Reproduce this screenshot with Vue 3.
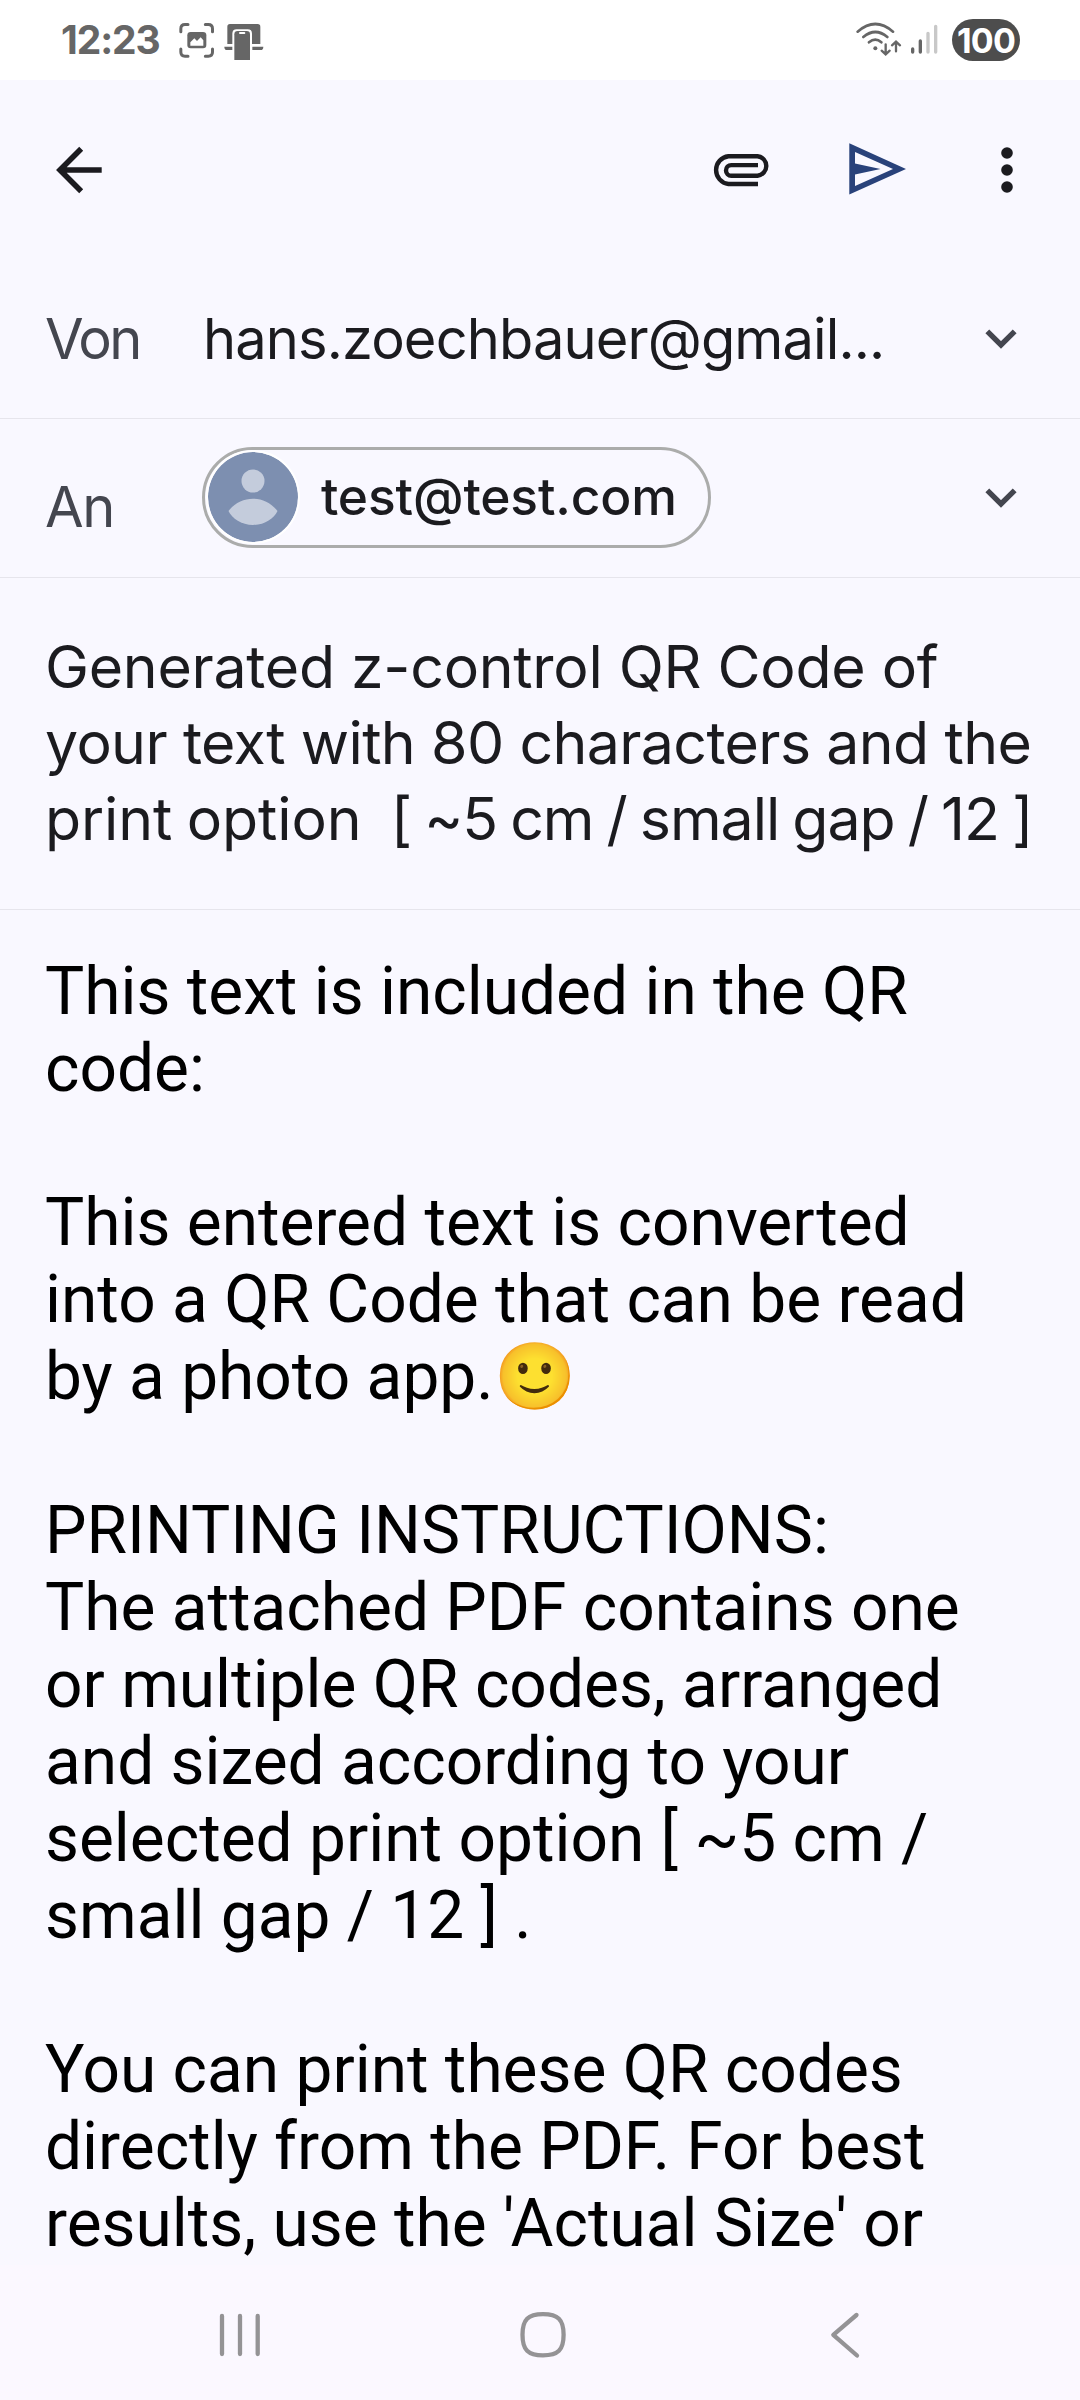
<script setup>
const subject = [
  [{ text: 'Generated z-control QR Code of', spacing: -0.28, word: 0 }],
  [{ text: 'your text with 80 characters and the', spacing: -0.63, word: 0 }],
  [
    { text: 'print option  ', spacing: -0.1, word: -1.9 },
    { text: '[ ~5 cm / small gap / 12 ]', spacing: -1, word: -2.6 },
  ],
]

const message = [
  'This text is included in the QR',
  'code:',
  '',
  'This entered text is converted',
  'into a QR Code that can be read',
  'by a photo app.🙂',
  '',
  'PRINTING INSTRUCTIONS:',
  'The attached PDF contains one',
  'or multiple QR codes, arranged',
  'and sized according to your',
  'selected print option [ ~5 cm /',
  'small gap / 12 ] .',
  '',
  'You can print these QR codes',
  'directly from the PDF. For best',
  "results, use the 'Actual Size' or",
]
</script>

<template>
  <div class="screen">
    <header class="status">
      <div class="status-left">
        <span class="clock">12:23</span>
        <svg class="status-icons" width="90" height="42" viewBox="410 57 270 126">
          <g fill="none" stroke="#666" stroke-width="9" stroke-linecap="round">
            <path d="M421.500 95V86Q421.500 73.500 434 73.500H443M495 73.500H504Q516.500 73.500 516.500 86V95M516.500 147V156Q516.500 168.500 504 168.500H495M443 168.500H434Q421.500 168.500 421.500 156V147" />
          </g>
          <rect x="441" y="96" width="57" height="49" rx="10" fill="#666" />
          <path d="M450 137V127L462 115L470 123L481 112L489 121V137Z" fill="#fff" />
          <path d="M561 80Q561 72 569 72H652Q660 72 660 80V132H635V101Q635 88 622 88H589Q576 88 576 101V132H561Z" fill="#666" />
          <path d="M552 140H576V150H560Q552 150 552 140ZM636 140H669Q669 150 661 150H636Z" fill="#666" />
          <path d="M582 103Q582 93 592 93H619Q629 93 629 103V180H582Z" fill="#666" />
          <rect x="596" y="96" width="19" height="6" rx="3" fill="#fff" />
        </svg>
      </div>
      <div class="status-right">
        <svg width="84" height="42" viewBox="76 58 252 126">
          <g fill="none" stroke="#666" stroke-width="8" stroke-linecap="round">
            <path d="M84 96Q137 50 190 96M101 112Q137 82 173 112M118 128Q137 112 155 128" />
            <path d="M168 134V163M156 153L168 164L180 153M199 155V126M187 137L199 126L211 137" stroke-width="7" />
          </g>
          <circle cx="137" cy="146" r="6" fill="#666" />
          <g stroke-width="10" stroke-linecap="round">
            <path d="M249 148V157M272 124V157" stroke="#666" />
            <path d="M295 101V157M318 80V157" stroke="#c8c8c8" />
          </g>
        </svg>
        <span class="battery">100</span>
      </div>
    </header>

    <nav class="toolbar">
      <svg width="60" height="60" viewBox="50 140 60 60">
        <path d="M101.700 170H61M81.200 148.800L60 170L81.200 191.200" fill="none" stroke="#1b1b1f" stroke-width="5.600" />
      </svg>
      <div class="actions">
        <svg width="66" height="60" viewBox="708 140 66 60">
          <path d="M758 184H728.400A14 14 0 0 1 728.400 156.200H757.500A9.800 9.800 0 0 1 757.500 175.700H731.300A5.300 5.300 0 0 1 731.300 165.100H758" fill="none" stroke="#1b1b1f" stroke-width="4.400" />
        </svg>
        <svg width="66" height="60" viewBox="843 140 66 60">
          <path d="M848.300 143.300L905 169L848.300 194.500ZM854 152V163.500L879.500 169L854 174.500V186L892 169Z" fill="#29427a" fill-rule="evenodd" />
        </svg>
        <svg width="20" height="60" viewBox="997 140 20 60" fill="#1b1b1f">
          <circle cx="1007" cy="153" r="5.800" />
          <circle cx="1007" cy="170" r="5.800" />
          <circle cx="1007" cy="187" r="5.800" />
        </svg>
      </div>
    </nav>

    <section class="field">
      <span class="label von">Von</span>
      <span class="sender">hans.zoechbauer@gmail...</span>
      <svg class="chevron" width="40" height="40" viewBox="0 0 40 40">
        <path d="M4.800 11.500L20 26.700L35.200 11.500" transform="translate(2 2) scale(.9)" />
      </svg>
    </section>

    <section class="field">
      <span class="label to">An</span>
      <div class="chip">
        <svg class="avatar" width="90" height="90" viewBox="0 0 90 90">
          <circle cx="45" cy="45" r="45" fill="#7d8fb0" />
          <circle cx="45" cy="29" r="11.500" fill="#c4ccdc" />
          <path d="M20.500 59C27 50.500 36 46.700 45 46.700S63 50.500 69.500 59C66 66.500 56.500 73 45 73S24 66.500 20.500 59Z" fill="#c4ccdc" />
        </svg>
        <span class="address">test@test.com</span>
      </div>
      <svg class="chevron" width="40" height="40" viewBox="0 0 40 40">
        <path d="M4.800 11.500L20 26.700L35.200 11.500" transform="translate(2 2) scale(.9)" />
      </svg>
    </section>

    <section class="subject">
      <div v-for="(line, i) in subject" :key="i"><span v-for="part in line" :key="part.text" :style="{ letterSpacing: part.spacing + 'px', wordSpacing: part.word + 'px' }">{{ part.text }}</span></div>
    </section>

    <main class="message">
      <div v-for="(line, i) in message" :key="i" class="line">{{ line }}</div>
    </main>

    <footer class="navbar">
      <svg width="60" height="60" viewBox="210 2305 60 60">
        <path d="M222 2316V2354M240 2316V2354M257.700 2316V2354" />
      </svg>
      <svg width="60" height="60" viewBox="512 2305 60 60">
        <path d="M542 2314.200C557 2314.200 562.600 2319.500 562.600 2334.800S557 2355.400 542 2355.400S521.500 2350 521.500 2334.800S527 2314.200 542 2314.200Z" />
      </svg>
      <svg width="60" height="60" viewBox="815 2305 60 60">
        <path d="M856.500 2315L833.300 2334.800L857 2355.500" />
      </svg>
    </footer>
  </div>
</template>

<style>
body {
  margin: 0;
}
</style>

<style scoped>
.screen {
  width: 1080px;
  height: 2400px;
  display: flex;
  flex-direction: column;
  overflow: hidden;
  background: #f9f8ff;
  color: #1b1b1f;
  font-family: Inter, "Liberation Sans", sans-serif;
  white-space: pre;
}
svg {
  display: block;
  flex: none;
}
.status {
  height: 80px;
  flex: none;
  box-sizing: border-box;
  padding: 0 60px 0 61px;
  display: flex;
  justify-content: space-between;
  align-items: center;
  background: #fff;
}
.status-left,
.status-right {
  display: flex;
  align-items: center;
}
.clock {
  width: 116px;
  font-size: 39px;
  font-weight: 700;
  line-height: 80px;
  letter-spacing: -1.1px;
  color: #666;
}
.status-right {
  gap: 13px;
}
.battery {
  width: 68px;
  height: 42px;
  border-radius: 21px;
  background: #4d4d4d;
  color: #fff;
  font-size: 34px;
  font-weight: 650;
  line-height: 43px;
  letter-spacing: -0.8px;
  text-align: center;
}
.toolbar {
  height: 180px;
  flex: none;
  box-sizing: border-box;
  padding: 0 63px 0 50px;
  display: flex;
  align-items: center;
  justify-content: space-between;
}
.actions {
  display: flex;
}
.actions svg:nth-child(2) {
  margin: 0 87px 0 70px;
}
.field {
  height: 159px;
  flex: none;
  box-sizing: border-box;
  padding: 0 59px 0 45px;
  display: flex;
  align-items: center;
  border-bottom: 1px solid #e6e5ec;
}
.label {
  width: 157px;
  flex: none;
  font-size: 56px;
  line-height: 70px;
  color: #44464f;
}
.von {
  width: 158px;
  letter-spacing: -2.6px;
}
.to {
  padding-top: 17px;
  letter-spacing: -1.5px;
}
.sender {
  font-size: 56px;
  line-height: 70px;
  letter-spacing: -0.88px;
}
.chevron {
  margin-left: auto;
}
.chevron path {
  fill: none;
  stroke: #44464f;
  stroke-width: 6;
}
.chip {
  width: 509px;
  height: 101px;
  box-sizing: border-box;
  border: 3px solid #abacab;
  border-radius: 51px;
  margin-bottom: 2px;
  padding-left: 3px;
  display: flex;
  align-items: center;
  gap: 23px;
}
.avatar {
  border-radius: 50%;
  box-shadow: 0 0 0 2px #fff;
}
.address {
  font-size: 51.5px;
  font-weight: 500;
  line-height: 64px;
  letter-spacing: -0.15px;
  padding-bottom: 2px;
}
.subject {
  height: 332px;
  flex: none;
  box-sizing: border-box;
  padding: 51px 0 0 45px;
  font-size: 59px;
  line-height: 76px;
  border-bottom: 1px solid #e6e5ec;
}
.message {
  height: 1355px;
  flex: none;
  box-sizing: border-box;
  padding: 43px 0 0 45px;
  overflow: hidden;
  font-family: Roboto, "Liberation Sans", sans-serif;
  font-size: 65.8px;
  line-height: 77px;
  color: #000;
}
.line {
  height: 77px;
}
.navbar {
  height: 135px;
  flex: none;
  box-sizing: border-box;
  padding: 40px 205px 0 210px;
  display: flex;
  justify-content: space-between;
  background: #fbf8ff;
}
.navbar path {
  fill: none;
  stroke: #949395;
  stroke-width: 4.3;
  stroke-linecap: round;
  stroke-linejoin: round;
}
</style>
